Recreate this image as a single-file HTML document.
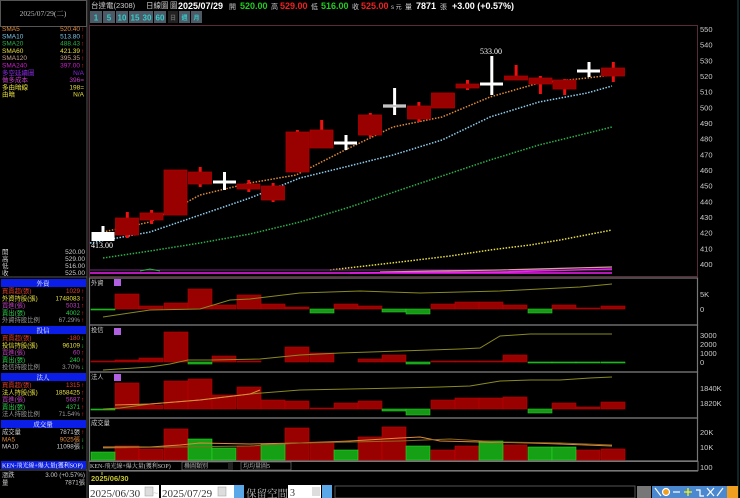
<!DOCTYPE html>
<html><head><meta charset="utf-8"><style>
html,body{margin:0;padding:0;background:#000;width:740px;height:498px;overflow:hidden}
svg{display:block}
text{font-family:"Liberation Sans","Noto Sans CJK TC",sans-serif}
.m{font-family:"Liberation Serif","Noto Serif CJK SC",serif}
</style></head><body>
<svg width="740" height="498" viewBox="0 0 740 498" xmlns="http://www.w3.org/2000/svg">
<rect width="740" height="498" fill="#000"/>
<rect x="0.5" y="0.5" width="86" height="26" fill="none" stroke="#555"/>
<text x="43" y="16" font-size="7.5" fill="#bbb" text-anchor="middle" class="m">2025/07/29(二)</text>
<line x1="87" y1="0" x2="87" y2="498" stroke="#555"/>
<line x1="89" y1="0" x2="89" y2="498" stroke="#333"/>
<g font-size="6.5" class="m">
<text x="2" y="31" fill="#e08a3a">SMA5</text><text x="80" y="31" fill="#e08a3a" text-anchor="end">520.40</text><text x="81" y="31" fill="#f22">↑</text>
<text x="2" y="38.3" fill="#7cc6e8">SMA10</text><text x="80" y="38.3" fill="#7cc6e8" text-anchor="end">513.80</text><text x="81" y="38.3" fill="#f22">↑</text>
<text x="2" y="45.6" fill="#2bb24a">SMA20</text><text x="80" y="45.6" fill="#2bb24a" text-anchor="end">488.43</text><text x="81" y="45.6" fill="#f22">↑</text>
<text x="2" y="52.9" fill="#e8e040">SMA60</text><text x="80" y="52.9" fill="#e8e040" text-anchor="end">421.39</text><text x="81" y="52.9" fill="#f22">↑</text>
<text x="2" y="60.2" fill="#c8a090">SMA120</text><text x="80" y="60.2" fill="#c8a090" text-anchor="end">395.35</text><text x="81" y="60.2" fill="#f22">↑</text>
<text x="2" y="67.5" fill="#d020d0">SMA240</text><text x="80" y="67.5" fill="#d020d0" text-anchor="end">397.00</text><text x="81" y="67.5" fill="#f22">↑</text>
<text x="2" y="74.8" fill="#8a2be2">多空延續圖</text><text x="84" y="74.8" fill="#8a2be2" text-anchor="end">N/A</text>
<text x="2" y="82.1" fill="#c040c0">做多成本</text><text x="84" y="82.1" fill="#c040c0" text-anchor="end">396=</text>
<text x="2" y="89.4" fill="#e8e040">多由暗線</text><text x="84" y="89.4" fill="#e8e040" text-anchor="end">198=</text>
<text x="2" y="96.7" fill="#e8e040">由暗</text><text x="84" y="96.7" fill="#e8e040" text-anchor="end">N/A</text>
</g>
<g font-size="6.5" class="m" fill="#ccc">
<text x="2" y="254">開</text><text x="85" y="254" text-anchor="end">520.00</text>
<text x="2" y="261">高</text><text x="85" y="261" text-anchor="end">529.00</text>
<text x="2" y="268">低</text><text x="85" y="268" text-anchor="end">516.00</text>
<text x="2" y="275">收</text><text x="85" y="275" text-anchor="end">525.00</text>
</g>
<line x1="0" y1="277" x2="87" y2="277" stroke="#555"/>
<rect x="1" y="279" width="85" height="8" fill="#0a1ee8"/><text x="43" y="285.5" font-size="6.5" fill="#fff" text-anchor="middle" class="m">外資</text>
<g font-size="6.3" class="m">
<text x="2" y="293" fill="#e0402a">買賣超(張)</text><text x="80" y="293" fill="#e0402a" text-anchor="end">1029</text><text x="81" y="293" fill="#f22">↑</text>
<text x="2" y="300.3" fill="#e8e040">外資持股(張)</text><text x="80" y="300.3" fill="#e8e040" text-anchor="end">1748083</text><text x="81" y="300.3" fill="#f22">↑</text>
<text x="2" y="307.6" fill="#c040c0">買進(張)</text><text x="80" y="307.6" fill="#c040c0" text-anchor="end">5031</text><text x="81" y="307.6" fill="#f22">↑</text>
<text x="2" y="314.9" fill="#2bd24a">賣出(張)</text><text x="80" y="314.9" fill="#2bd24a" text-anchor="end">4002</text><text x="81" y="314.9" fill="#f22">↑</text>
<text x="2" y="322.2" fill="#999">外資持股比例</text><text x="80" y="322.2" fill="#999" text-anchor="end">67.29%</text><text x="81" y="322.2" fill="#f22">↑</text>
</g>
<rect x="1" y="326" width="85" height="8" fill="#0a1ee8"/><text x="43" y="332.5" font-size="6.5" fill="#fff" text-anchor="middle" class="m">投信</text>
<g font-size="6.3" class="m">
<text x="2" y="340" fill="#e0402a">買賣超(張)</text><text x="80" y="340" fill="#e0402a" text-anchor="end">-180</text><text x="81" y="340" fill="#2d2">↓</text>
<text x="2" y="347.3" fill="#e8e040">投信持股(張)</text><text x="80" y="347.3" fill="#e8e040" text-anchor="end">96109</text><text x="81" y="347.3" fill="#2d2">↓</text>
<text x="2" y="354.6" fill="#c040c0">買進(張)</text><text x="80" y="354.6" fill="#c040c0" text-anchor="end">60</text><text x="81" y="354.6" fill="#f22">↑</text>
<text x="2" y="361.9" fill="#2bd24a">賣出(張)</text><text x="80" y="361.9" fill="#2bd24a" text-anchor="end">240</text><text x="81" y="361.9" fill="#f22">↑</text>
<text x="2" y="369.2" fill="#999">投信持股比例</text><text x="80" y="369.2" fill="#999" text-anchor="end">3.70%</text><text x="81" y="369.2" fill="#2d2">↓</text>
</g>
<rect x="1" y="373" width="85" height="8" fill="#0a1ee8"/><text x="43" y="379.5" font-size="6.5" fill="#fff" text-anchor="middle" class="m">法人</text>
<g font-size="6.3" class="m">
<text x="2" y="387" fill="#e0402a">買賣超(張)</text><text x="80" y="387" fill="#e0402a" text-anchor="end">1315</text><text x="81" y="387" fill="#f22">↑</text>
<text x="2" y="394.3" fill="#e8e040">法人持股(張)</text><text x="80" y="394.3" fill="#e8e040" text-anchor="end">1858425</text><text x="81" y="394.3" fill="#f22">↑</text>
<text x="2" y="401.6" fill="#c040c0">買進(張)</text><text x="80" y="401.6" fill="#c040c0" text-anchor="end">5687</text><text x="81" y="401.6" fill="#f22">↑</text>
<text x="2" y="408.9" fill="#2bd24a">賣出(張)</text><text x="80" y="408.9" fill="#2bd24a" text-anchor="end">4371</text><text x="81" y="408.9" fill="#f22">↑</text>
<text x="2" y="416.2" fill="#999">法人持股比例</text><text x="80" y="416.2" fill="#999" text-anchor="end">71.54%</text><text x="81" y="416.2" fill="#f22">↑</text>
</g>
<rect x="1" y="420" width="85" height="8" fill="#0a1ee8"/><text x="43" y="426.5" font-size="6.5" fill="#fff" text-anchor="middle" class="m">成交量</text>
<g font-size="6.3" class="m">
<text x="2" y="434" fill="#ccc">成交量</text><text x="80" y="434" fill="#ccc" text-anchor="end">7871張</text><text x="81" y="434" fill="#f22">↑</text>
<text x="2" y="441.3" fill="#e08a3a">MA5</text><text x="80" y="441.3" fill="#e08a3a" text-anchor="end">9025張</text><text x="81" y="441.3" fill="#2d2">↓</text>
<text x="2" y="448.6" fill="#ccc">MA10</text><text x="80" y="448.6" fill="#ccc" text-anchor="end">11098張</text><text x="81" y="448.6" fill="#2d2">↓</text>
</g>
<rect x="1" y="461" width="85" height="8" fill="#0a1ee8"/><text x="2" y="467.5" font-size="6" fill="#fff" class="m">KEN-飛光線+爆大量(獲利SOP)</text>
<line x1="0" y1="470" x2="87" y2="470" stroke="#555"/>
<g font-size="6.3" class="m" fill="#ccc">
<text x="2" y="477">漲跌</text><text x="85" y="477" text-anchor="end">3.00 (+0.57%)</text>
<text x="2" y="484.5">量</text><text x="85" y="484.5" text-anchor="end">7871張</text>
</g>

<g font-size="7.5" class="m"><text x="91" y="8" fill="#ccc">台達電(2308)</text><text x="146" y="8" fill="#ccc">日線圖</text><text x="170" y="8" fill="#ccc">圖</text></g>
<g font-size="9" font-weight="bold">
<text x="178" y="9" fill="#fff">2025/07/29</text>
<text x="229" y="9" font-size="7" fill="#ccc" font-weight="normal">開</text><text x="240" y="9" fill="#2c2">520.00</text>
<text x="271" y="9" font-size="7" fill="#ccc" font-weight="normal">高</text><text x="280" y="9" fill="#e22">529.00</text>
<text x="311" y="9" font-size="7" fill="#ccc" font-weight="normal">低</text><text x="321" y="9" fill="#2c2">516.00</text>
<text x="352" y="9" font-size="7" fill="#ccc" font-weight="normal">收</text><text x="361" y="9" fill="#e22">525.00</text>
<text x="391" y="9" font-size="6" fill="#ccc" font-weight="normal">s 元</text>
<text x="405" y="9" font-size="7" fill="#ccc" font-weight="normal">量</text><text x="416" y="9" fill="#fff">7871</text>
<text x="440" y="9" font-size="7" fill="#ccc" font-weight="normal">張</text><text x="452" y="9" fill="#fff">+3.00 (+0.57%)</text>
</g>
<g font-size="8" font-weight="bold" fill="#3cc">
<rect x="90" y="11" width="12" height="12" fill="#4d5a66"/><text x="96" y="20.5" text-anchor="middle">1</text>
<rect x="103" y="11" width="12" height="12" fill="#4d5a66"/><text x="109" y="20.5" text-anchor="middle">5</text>
<rect x="116" y="11" width="12" height="12" fill="#4d5a66"/><text x="122" y="20.5" text-anchor="middle">10</text>
<rect x="129" y="11" width="12" height="12" fill="#4d5a66"/><text x="135" y="20.5" text-anchor="middle">15</text>
<rect x="141" y="11" width="12" height="12" fill="#4d5a66"/><text x="147" y="20.5" text-anchor="middle">30</text>
<rect x="154" y="11" width="12" height="12" fill="#4d5a66"/><text x="160" y="20.5" text-anchor="middle">60</text>
<rect x="168" y="11" width="10" height="12" fill="#222"/><text x="173" y="20" font-size="6" fill="#666" text-anchor="middle">日</text>
<rect x="179" y="11" width="11" height="12" fill="#4d5a66"/><text x="184.5" y="20" font-size="6" text-anchor="middle">週</text>
<rect x="191" y="11" width="11" height="12" fill="#4d5a66"/><text x="196.5" y="20" font-size="6" text-anchor="middle">月</text>
</g>

<rect x="89.5" y="25.5" width="608" height="251" fill="none" stroke="#5a2a3a"/>
<g font-size="7.5" fill="#ccc" class="m">
<text x="700" y="32">550</text><text x="700" y="47.7">540</text><text x="700" y="63.3">530</text><text x="700" y="79">520</text>
<text x="700" y="94.7">510</text><text x="700" y="110.3">500</text><text x="700" y="126">490</text><text x="700" y="141.7">480</text>
<text x="700" y="157.3">470</text><text x="700" y="173">460</text><text x="700" y="188.7">450</text><text x="700" y="204.3">440</text>
<text x="700" y="220">430</text><text x="700" y="235.7">420</text><text x="700" y="251.3">410</text><text x="700" y="267">400</text>
</g>
<line x1="738" y1="0" x2="738" y2="498" stroke="#1a4a4a"/>

<g fill="none" stroke-dasharray="1.5 1.5" stroke-width="1.5">
<polyline stroke="#e08a3a" points="103,232 150,222 200,195 250,183 296,175 345,150 393,127 442,117 490,97 539,83 587,78 612,75"/>
<polyline stroke="#8cd0f0" points="90,243 150,232 200,215 250,198 300,178 345,167 393,155 442,140 490,117 539,102 587,93 612,86"/>
<polyline stroke="#2bb24a" points="103,258 150,251 200,243 250,234 300,222 350,207 400,190 442,176 490,160 539,145 580,135 612,127"/>
<polyline stroke="#e8e040" points="330,270 400,262 450,256 490,250 530,245 560,240 612,230"/>
</g>
<line x1="90" y1="270" x2="612" y2="270" stroke="#7a2a8a" stroke-width="1"/>
<polyline fill="none" stroke="#d8a0a0" stroke-width="1.2" points="380,272 500,270 612,267"/>
<line x1="90" y1="273" x2="612" y2="273" stroke="#f020f0" stroke-width="1.5"/>
<polyline fill="none" stroke="#f020f0" stroke-width="1.5" points="350,273 500,272 612,269"/>
<polyline fill="none" stroke="#2bb24a" stroke-width="1" points="140,271 150,269 160,271"/>

<g stroke="#ee1111" stroke-width="3" fill="none">
<line x1="127.3" y1="212" x2="127.3" y2="238"/><line x1="151.6" y1="210" x2="151.6" y2="224"/>
<line x1="200.2" y1="167" x2="200.2" y2="187"/><line x1="248.8" y1="180" x2="248.8" y2="192"/>
<line x1="273.1" y1="183" x2="273.1" y2="202"/><line x1="297.4" y1="130" x2="297.4" y2="172"/>
<line x1="321.7" y1="120" x2="321.7" y2="148"/><line x1="370.3" y1="113" x2="370.3" y2="137"/>
<line x1="418.9" y1="102" x2="418.9" y2="122"/><line x1="467.5" y1="80" x2="467.5" y2="90"/>
<line x1="516.1" y1="65" x2="516.1" y2="80"/><line x1="540.4" y1="76" x2="540.4" y2="94"/>
<line x1="564.7" y1="79" x2="564.7" y2="95"/><line x1="613.3" y1="62" x2="613.3" y2="82"/>
</g>
<g fill="#990000" stroke="#b00000" stroke-width="0.8">
<rect x="115.5" y="218" width="23" height="17"/><rect x="140" y="213" width="23" height="7"/>
<rect x="164" y="170" width="23" height="45"/><rect x="188.5" y="172" width="23" height="12"/>
<rect x="237" y="184" width="23" height="5"/><rect x="261.5" y="186" width="23" height="14"/>
<rect x="286" y="132" width="23" height="40"/><rect x="310" y="130" width="23" height="18"/>
<rect x="358.5" y="115" width="23" height="20"/><rect x="407.5" y="106" width="23" height="13"/>
<rect x="431.5" y="93" width="23" height="15"/><rect x="456" y="84" width="23" height="4"/>
<rect x="504.5" y="76" width="23" height="4"/><rect x="529" y="78" width="23" height="6"/>
<rect x="553" y="80" width="23" height="9"/><rect x="601.5" y="68" width="23" height="8"/>
</g>
<g stroke="#fff" stroke-width="3">
<rect x="91.5" y="232" width="23" height="9" fill="#fff" stroke="none"/>
<line x1="103" y1="226" x2="103" y2="232"/>
<line x1="213" y1="182" x2="236" y2="182"/><line x1="224.5" y1="172" x2="224.5" y2="190"/>
<line x1="334" y1="143" x2="357" y2="143"/><line x1="346" y1="135" x2="346" y2="150"/>
<line x1="383" y1="106" x2="406" y2="106"/><line x1="394.6" y1="88" x2="394.6" y2="115"/>
<line x1="480" y1="84" x2="503" y2="84"/><line x1="491.8" y1="56" x2="491.8" y2="95"/>
<line x1="577" y1="71" x2="600" y2="71"/><line x1="589" y1="62" x2="589" y2="77"/>
</g>
<line x1="383" y1="106" x2="406" y2="106" stroke="#888" stroke-width="1"/>
<text x="91" y="248" font-size="8" fill="#fff" class="m">413.00</text>
<text x="480" y="54" font-size="8" fill="#fff" class="m">533.00</text>

<g stroke="#777" stroke-width="1.2" fill="none">
<rect x="89.5" y="278" width="608" height="47"/>
<rect x="89.5" y="325" width="608" height="47"/>
<rect x="89.5" y="372" width="608" height="46"/>
<rect x="89.5" y="418" width="608" height="43"/>
<rect x="89.5" y="461" width="608" height="10"/>
</g>
<g font-size="6.3" fill="#ccc" class="m">
<text x="91" y="285">外資</text><text x="91" y="332">投信</text><text x="91" y="379">法人</text><text x="91" y="425">成交量</text>
</g>
<g fill="#b060e0"><rect x="114" y="279" width="7" height="7"/><rect x="114" y="328" width="7" height="7"/><rect x="114" y="374" width="7" height="7"/></g>
<g font-size="7.5" fill="#ccc" class="m">
<text x="700" y="297">5K</text><text x="700" y="312">0</text>
<text x="700" y="338">3000</text><text x="700" y="347">2000</text><text x="700" y="356">1000</text><text x="700" y="365">0</text>
<text x="700" y="391">1840K</text><text x="700" y="406">1820K</text>
<text x="700" y="435">20K</text><text x="700" y="450">10K</text><text x="700" y="470">100</text>
</g>

<g fill="#990000" stroke="#b00" stroke-width="0.6">
<rect x="115" y="294" width="24" height="15"/><rect x="139" y="306" width="24" height="3"/>
<rect x="164" y="303" width="24" height="6"/><rect x="188" y="289" width="24" height="20"/>
<rect x="212" y="305" width="24" height="4"/><rect x="237" y="295" width="24" height="14"/>
<rect x="261" y="304" width="24" height="5"/><rect x="285" y="307" width="24" height="2"/>
<rect x="334" y="304" width="24" height="5"/><rect x="358" y="306" width="24" height="3"/>
<rect x="431" y="304" width="24" height="5"/><rect x="455" y="302" width="24" height="7"/>
<rect x="479" y="302" width="24" height="7"/><rect x="503" y="305" width="24" height="4"/>
<rect x="552" y="305" width="24" height="4"/><rect x="576" y="308" width="24" height="1"/>
<rect x="601" y="306" width="24" height="3"/>
</g>
<g fill="#169a16" stroke="#2c2" stroke-width="0.6">
<rect x="91" y="309" width="24" height="1"/><rect x="310" y="309" width="24" height="4"/>
<rect x="382" y="309" width="24" height="3"/><rect x="406" y="309" width="24" height="5"/>
<rect x="528" y="309" width="24" height="4"/>
</g>
<polyline fill="none" stroke="#8a8a20" points="103,317 150,310 200,309 230,300 250,299 300,293 330,292 360,291 390,292 420,293 460,292 500,291 540,289 580,287 612,284"/>

<g fill="#990000" stroke="#b00" stroke-width="0.6">
<rect x="91" y="361" width="24" height="1"/><rect x="115" y="360" width="24" height="2"/>
<rect x="139" y="358" width="24" height="4"/><rect x="164" y="332" width="24" height="30"/>
<rect x="212" y="356" width="24" height="6"/><rect x="237" y="361" width="24" height="1"/>
<rect x="285" y="347" width="24" height="15"/><rect x="310" y="353" width="24" height="9"/>
<rect x="358" y="359" width="24" height="3"/><rect x="382" y="355" width="24" height="7"/>
<rect x="431" y="361" width="24" height="1"/><rect x="455" y="361" width="24" height="1"/>
<rect x="479" y="361" width="24" height="1"/><rect x="503" y="355" width="24" height="7"/>
</g>
<g fill="#169a16" stroke="#2c2" stroke-width="0.6">
<rect x="188" y="362" width="24" height="2"/><rect x="406" y="362" width="24" height="2"/>
<rect x="528" y="362" width="24" height="1"/><rect x="552" y="362" width="24" height="1"/>
<rect x="576" y="362" width="24" height="1"/><rect x="601" y="362" width="24" height="1"/>
</g>
<polyline fill="none" stroke="#8a8a20" points="103,370 150,367 170,364 188,360 212,360 260,359 300,355 340,353 400,351 460,349 480,348 500,336 530,334 560,334 612,334"/>

<g fill="#990000" stroke="#b00" stroke-width="0.6">
<rect x="115" y="383" width="24" height="26"/><rect x="139" y="405" width="24" height="4"/>
<rect x="164" y="381" width="24" height="28"/><rect x="188" y="379" width="24" height="30"/>
<rect x="212" y="395" width="24" height="14"/><rect x="237" y="387" width="24" height="22"/>
<rect x="261" y="400" width="24" height="9"/><rect x="285" y="401" width="24" height="8"/>
<rect x="310" y="408" width="24" height="1"/><rect x="334" y="403" width="24" height="6"/>
<rect x="358" y="401" width="24" height="8"/><rect x="431" y="400" width="24" height="9"/>
<rect x="455" y="398" width="24" height="11"/><rect x="479" y="398" width="24" height="11"/>
<rect x="503" y="397" width="24" height="12"/><rect x="552" y="403" width="24" height="6"/>
<rect x="576" y="407" width="24" height="2"/><rect x="601" y="402" width="24" height="7"/>
</g>
<g fill="#169a16" stroke="#2c2" stroke-width="0.6">
<rect x="91" y="409" width="24" height="1"/><rect x="382" y="409" width="24" height="2"/>
<rect x="406" y="409" width="24" height="6"/><rect x="528" y="409" width="24" height="4"/>
</g>
<polyline fill="none" stroke="#8a8a20" points="103,409 120,408 150,404 200,400 250,394 300,390 350,389 400,388 440,387 470,386 500,381 530,380 560,380 590,378 612,377"/>
<polyline fill="none" stroke="#e08a3a" points="115,405 150,404 200,400 250,394 260,390"/>

<g fill="#990000" stroke="#c00" stroke-width="0.6">
<rect x="115" y="446" width="24" height="14"/><rect x="139" y="449" width="24" height="11"/>
<rect x="164" y="429" width="24" height="31"/><rect x="237" y="446" width="24" height="14"/>
<rect x="285" y="428" width="24" height="32"/><rect x="310" y="442" width="24" height="18"/>
<rect x="358" y="437" width="24" height="23"/><rect x="382" y="427" width="24" height="33"/>
<rect x="431" y="450" width="24" height="10"/><rect x="455" y="446" width="24" height="14"/>
<rect x="503" y="445" width="24" height="15"/><rect x="576" y="450" width="24" height="10"/>
<rect x="601" y="449" width="24" height="11"/>
</g>
<g fill="#16a016" stroke="#2d2" stroke-width="0.6">
<rect x="91" y="452" width="24" height="8"/><rect x="188" y="439" width="24" height="21"/>
<rect x="212" y="448" width="24" height="12"/><rect x="261" y="444" width="24" height="16"/>
<rect x="334" y="450" width="24" height="10"/><rect x="406" y="446" width="24" height="14"/>
<rect x="479" y="441" width="24" height="19"/><rect x="528" y="447" width="24" height="13"/>
<rect x="552" y="447" width="24" height="13"/>
</g>
<polyline fill="none" stroke="#e08a3a" points="103,447 150,447 180,445 200,443 250,444 300,443 350,441 400,438 420,437 440,441 480,442 530,443 560,444 612,446"/>
<polyline fill="none" stroke="#8a6a20" points="103,448 250,446 300,443 400,441 450,439 500,442 560,443 612,445"/>

<rect x="89" y="461.5" width="609" height="9" fill="#000" stroke="#777"/>
<text x="90" y="468" font-size="6" fill="#ccc" class="m">KEN-飛光線+爆大量(獲利SOP)</text>
<rect x="182" y="462" width="50" height="8" fill="#000" stroke="#888" stroke-width="0.6"/><text x="184" y="468" font-size="6" fill="#ccc" class="m">疊圖類別</text>
<rect x="228" y="462" width="5" height="8" fill="#222"/>
<rect x="241" y="462" width="50" height="8" fill="#000" stroke="#888" stroke-width="0.6"/><text x="243" y="468" font-size="6" fill="#ccc" class="m">均均量圖5</text>
<text x="91" y="481" font-size="7.5" fill="#c8c830" font-weight="bold">2025/06/30</text>
<line x1="102" y1="472" x2="102" y2="475" stroke="#c8c830"/>
<rect x="89" y="485" width="70" height="13" fill="#fff"/><text x="90" y="497" font-size="11" fill="#333" class="m">2025/06/30</text>
<rect x="145" y="487" width="8" height="9" fill="#ddd" stroke="#999" stroke-width="0.5"/>
<text x="153" y="496" font-size="9" fill="#ccc">~</text>
<rect x="161" y="485" width="73" height="13" fill="#fff"/><text x="162" y="497" font-size="11" fill="#333" class="m">2025/07/29</text>
<rect x="218" y="487" width="8" height="9" fill="#ddd" stroke="#999" stroke-width="0.5"/>
<rect x="234" y="485" width="10" height="13" fill="#5aa8e8"/>
<text x="246" y="497" font-size="10.5" fill="#bbb" class="m">保留空間</text>
<rect x="288" y="485" width="33" height="13" fill="#fff"/><text x="290" y="496" font-size="10" fill="#333" class="m">3</text>
<rect x="312" y="487" width="8" height="9" fill="#ddd"/>
<rect x="322" y="485" width="10" height="13" fill="#5aa8e8"/>
<rect x="335" y="486" width="300" height="12" fill="#000" stroke="#555"/>
<rect x="637" y="486" width="14" height="12" fill="#777"/>
<rect x="652" y="486" width="86" height="12" fill="#4a88d0"/>
<g fill="#fff" stroke="#fff" stroke-width="1.2">
<line x1="655" y1="488" x2="661" y2="496"/><circle cx="666" cy="492" r="3.5" fill="#f0a020" stroke="#fff"/>
<line x1="673" y1="492" x2="680" y2="492"/><line x1="684" y1="492" x2="692" y2="492" stroke="#ff0"/><line x1="688" y1="488" x2="688" y2="496" stroke="#ff0"/>
<polyline fill="none" points="696,490 700,490 700,496 704,496"/>
<line x1="707" y1="488" x2="714" y2="496"/><line x1="714" y1="488" x2="707" y2="496"/>
<line x1="717" y1="496" x2="723" y2="488"/>
</g>
<rect x="727" y="486" width="11" height="12" fill="#f0a020"/>
</svg>
</body></html>
